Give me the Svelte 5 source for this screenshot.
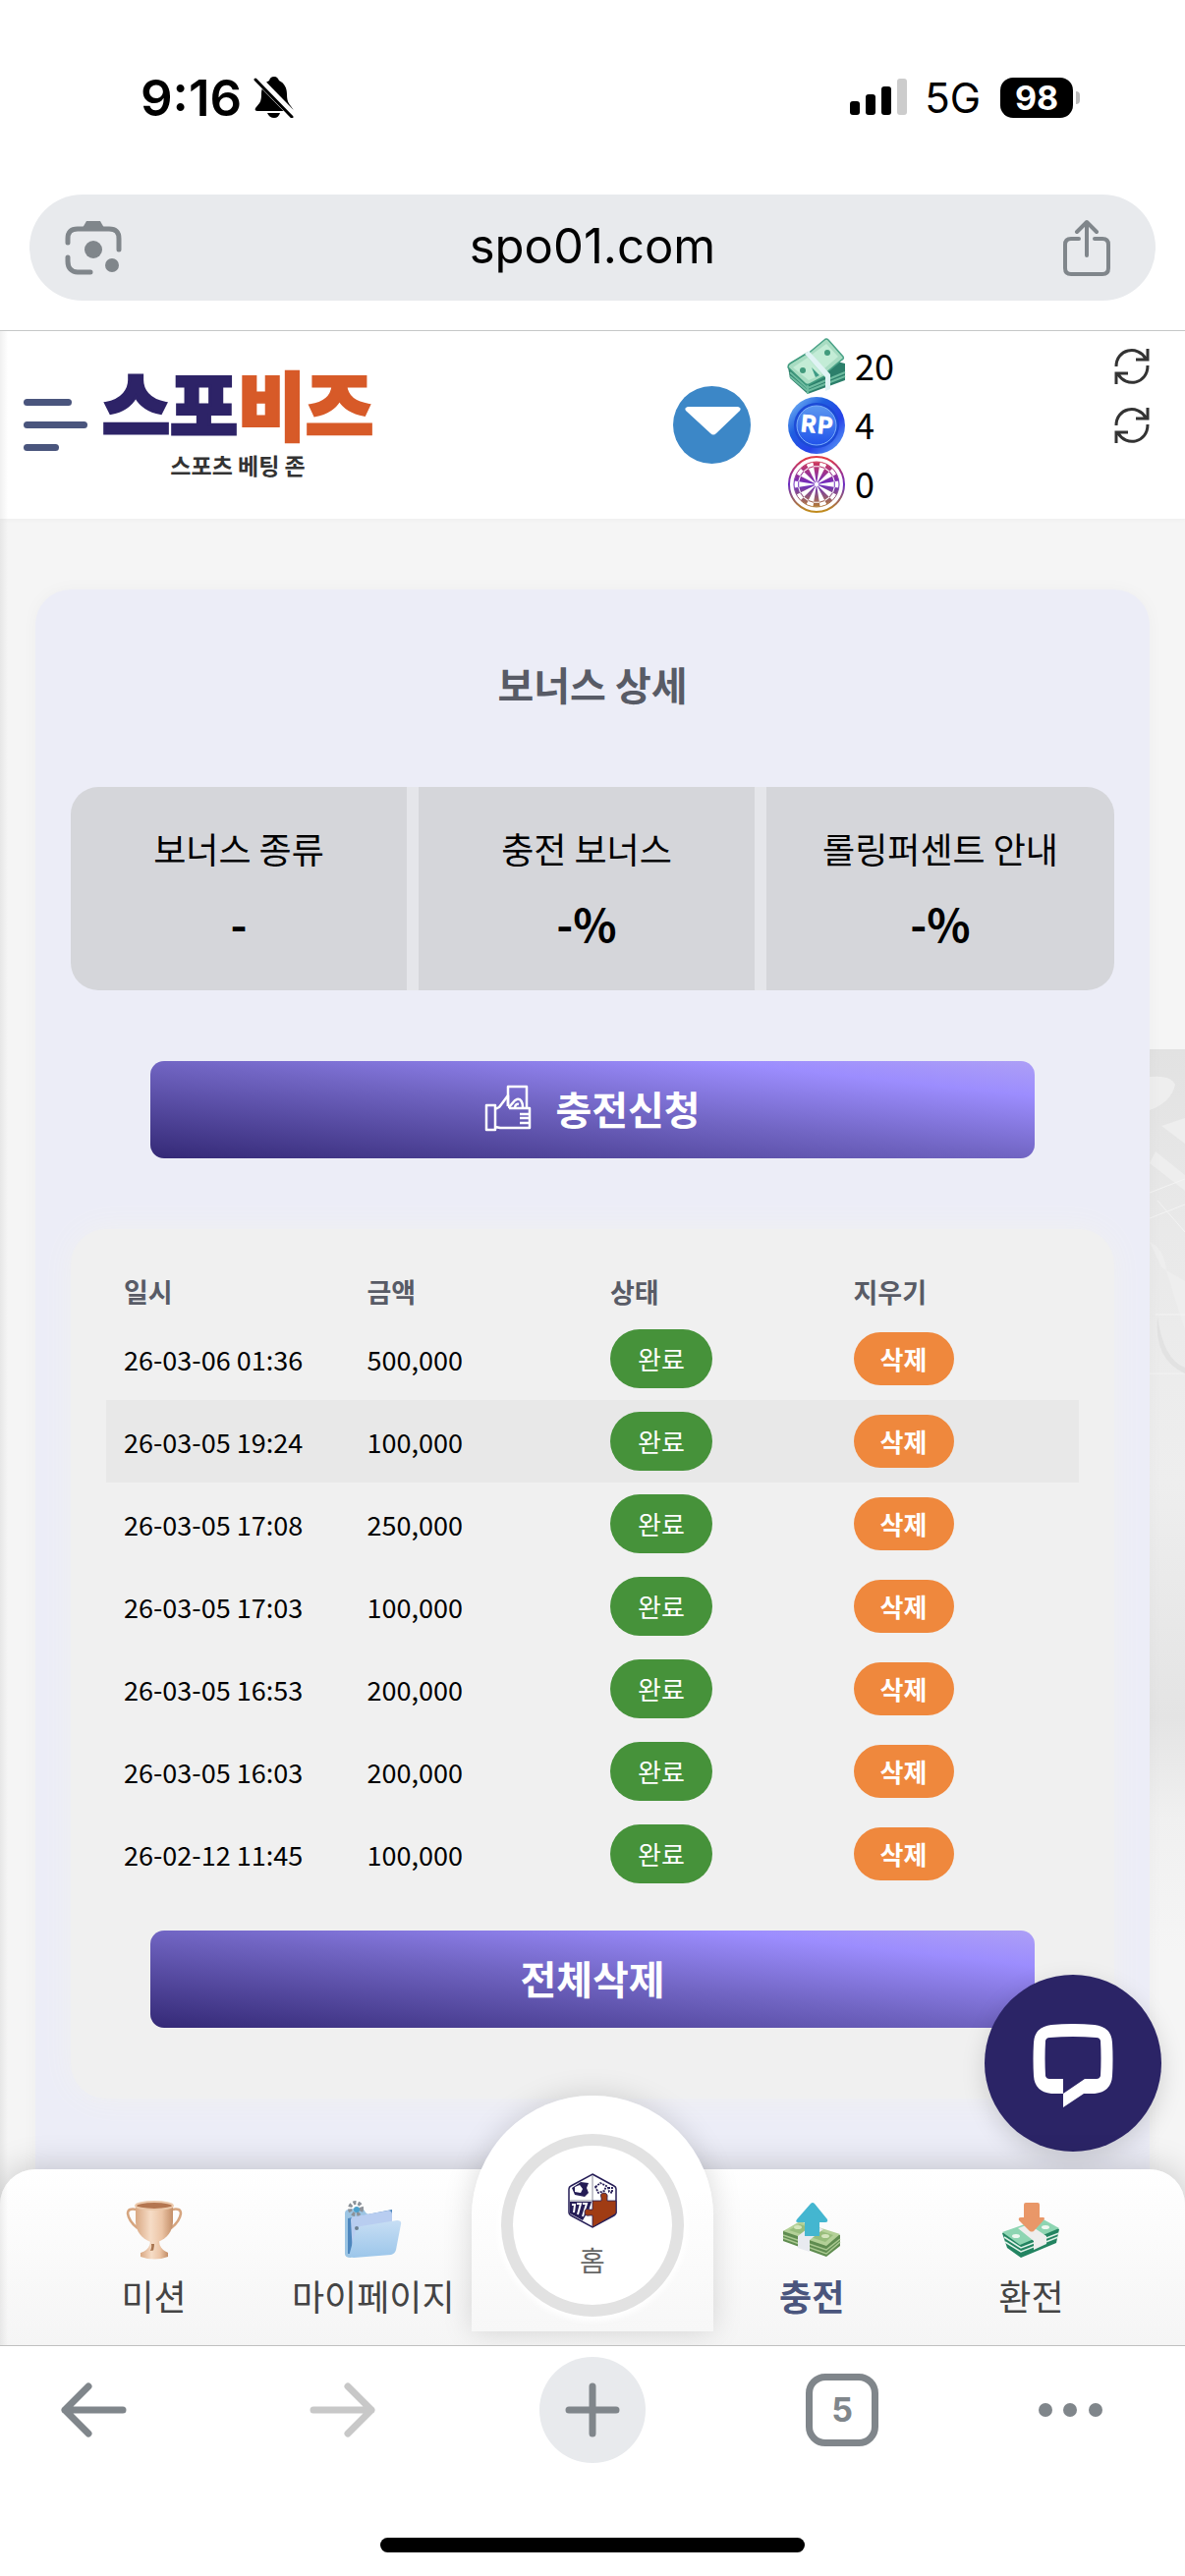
<script>
    const bonuses = [
        { label: "보너스 종류", value: "-" },
        { label: "충전 보너스", value: "-%" },
        { label: "롤링퍼센트 안내", value: "-%" },
    ];

    let deposits = [
        { date: "26-03-06 01:36", amount: "500,000" },
        { date: "26-03-05 19:24", amount: "100,000", active: true },
        { date: "26-03-05 17:08", amount: "250,000" },
        { date: "26-03-05 17:03", amount: "100,000" },
        { date: "26-03-05 16:53", amount: "200,000" },
        { date: "26-03-05 16:03", amount: "200,000" },
        { date: "26-02-12 11:45", amount: "100,000" },
    ];

    function removeDeposit(deposit) {
        deposits = deposits.filter((d) => d !== deposit);
    }

    function removeAll() {
        deposits = [];
    }

    // dartboard sectors
    const sectors = Array.from({ length: 20 }, (_, i) => i);

    function wedge(i, inner, outer) {
        const a = ((i * 18 - 9) * Math.PI) / 180;
        const b = ((i * 18 + 9) * Math.PI) / 180;
        const p = (r, t) => `${30 + r * Math.sin(t)} ${30 - r * Math.cos(t)}`;
        return `M${p(inner, a)}L${p(outer, a)}L${p(outer, b)}L${p(inner, b)}Z`;
    }
</script>

<div class="phone">
    <div class="status-bar">
        <div class="status-left">
            <span class="clock">9:16</span>
            <svg width="42" height="42" viewBox="0 0 42 42">
                <path
                    d="M21 0c3 0 4 2 5 4 6 3 8 8 8 14 0 9 3 10 6 15 1 2 0 2-2 2H4c-2 0-3-1-2-3 4-5 6-6 6-14 0-7 3-12 8-14 1-3 2-4 5-4z"
                />
                <path d="M14 37h13c-1 3-3 5-6 5s-6-2-7-5z" />
                <path d="M3 1l38 39" stroke="#fff" stroke-width="8" />
                <path d="M2 3l37 38" stroke="#000" stroke-width="3" stroke-linecap="round" />
            </svg>
        </div>
        <div class="status-right">
            <svg width="58" height="38" viewBox="0 0 58 38">
                <rect x="0" y="23" width="10" height="14" rx="3" />
                <rect x="16" y="16" width="10" height="21" rx="3" />
                <rect x="32" y="8" width="10" height="29" rx="3" />
                <rect x="48" y="0" width="10" height="37" rx="3" fill="#ccc" />
            </svg>
            <span class="network">5G</span>
            <div class="battery"><span>98</span></div>
        </div>
    </div>

    <div class="address-bar">
        <button class="plain" aria-label="Lens">
            <svg width="58" height="58" viewBox="0 0 58 58" fill="none" stroke="#80868b" stroke-width="5" stroke-linecap="round">
                <path d="M3 24v-4c0-7 3-10 10-10h32c7 0 10 3 10 10v11" />
                <path d="M3 39v4c0 7 4 11 10 11h13" />
                <path d="M18 9l4-7h14l4 7z" fill="#80868b" stroke="none" />
                <circle cx="29" cy="31" r="9" fill="#80868b" stroke="none" />
                <circle cx="48" cy="47" r="7" fill="#80868b" stroke="none" />
            </svg>
        </button>
        <span>spo01.com</span>
        <button class="plain" aria-label="Share">
            <svg width="58" height="58" viewBox="5 0 58 58" fill="none" stroke="#80868b" stroke-width="4" stroke-linecap="round" stroke-linejoin="round">
                <path d="M21 20h-8c-4 0-6 2-6 6v24c0 4 2 6 6 6h32c4 0 6-2 6-6V26c0-4-2-6-6-6h-8" />
                <path d="M29 37V4M19 13L29 3l10 10" />
            </svg>
        </button>
    </div>

    <div class="site">
        <header>
            <button class="plain menu" aria-label="메뉴">
                <i></i>
                <i></i>
                <i></i>
            </button>
            <a class="logo" href="#home">
                <strong>스포<em>비즈</em></strong>
                <small>스포츠 베팅 존</small>
            </a>
            <button class="plain caret" aria-label="지갑 열기">
                <svg width="79" height="79" viewBox="0 0 79 79">
                    <circle cx="39.500" cy="39.500" r="39.500" fill="#3c87c7" />
                    <path d="M15 21h51q4 1 2 4L44 48q-3 3-6 0L13 25q-2-3 2-4z" fill="#fff" />
                </svg>
            </button>
            <ul class="wallet">
                <li>
                    <svg width="60" height="60" viewBox="0 0 60 60">
                        <path d="M1 31l2 11 18 16 38-14V27L30 20z" fill="#2c7f6b" />
                        <path d="M3 36l18 16 38-16M3 40l18 15 38-15M21 48v10" fill="none" stroke="#6dbb9f" stroke-width="2" />
                        <path d="M20 18L38 3q2-2 4 0l15 17q1 2-1 3L38 38z" fill="#a8dcc2" stroke="#4aa287" stroke-width="1.500" />
                        <path d="M25 18L40 7l12 13-14 12z" fill="#c3ecd6" />
                        <path d="M1 31q0-3 2-4l18-11 21 22-19 10q-2 1-4 0z" fill="#a8dcc2" stroke="#3f9a7e" stroke-width="1.500" />
                        <path d="M6 31l15-10 15 17-14 6z" fill="#c3ecd6" />
                        <circle cx="16" cy="34" r="3" fill="#419a7c" />
                        <circle cx="41" cy="16" r="3" fill="#419a7c" />
                        <path d="M25 31l8 8-4 2z" fill="#3d9b85" />
                        <path d="M18 17l4-3 22 24v15l-5 2V41z" fill="#e0f3f4" />
                    </svg>
                    <span>20</span>
                    <button class="plain refresh" aria-label="보유금 새로고침">
                        {@render refreshIcon()}
                    </button>
                </li>
                <li>
                    <svg width="60" height="60" viewBox="0 0 60 60">
                        <defs>
                            <linearGradient id="coin" x1="0" y1="0" x2="1" y2="1">
                                <stop offset="0" stop-color="#8ac8fa" />
                                <stop offset="0.350" stop-color="#1f5fe0" />
                                <stop offset="0.650" stop-color="#2742e8" />
                                <stop offset="1" stop-color="#63b2fa" />
                            </linearGradient>
                            <linearGradient id="coinFace" x1="0" y1="0" x2="0" y2="1">
                                <stop offset="0" stop-color="#5b98f0" />
                                <stop offset="1" stop-color="#2153ea" />
                            </linearGradient>
                        </defs>
                        <circle cx="30" cy="30" r="29" fill="url(#coin)" />
                        <circle cx="30" cy="30" r="23" fill="#1c4ad6" />
                        <circle cx="30" cy="30" r="20" fill="url(#coinFace)" stroke="#7db0fb" />
                        <text x="30" y="38" text-anchor="middle" class="coin-text" transform="rotate(6 30 30)">RP</text>
                    </svg>
                    <span>4</span>
                    <button class="plain refresh" aria-label="포인트 새로고침">
                        {@render refreshIcon()}
                    </button>
                </li>
                <li>
                    <svg width="60" height="60" viewBox="0 0 60 60">
                        <defs>
                            <linearGradient id="dart" gradientUnits="userSpaceOnUse" x1="0" y1="0" x2="0" y2="60">
                                <stop offset="0.050" stop-color="#e23c46" />
                                <stop offset="0.500" stop-color="#6a2bc4" />
                                <stop offset="0.950" stop-color="#c08a1c" />
                            </linearGradient>
                        </defs>
                        <g fill="url(#dart)">
                            <circle cx="30" cy="30" r="28" fill="none" stroke="url(#dart)" stroke-width="2" />
                            <circle cx="30" cy="30" r="23" fill="none" stroke="url(#dart)" stroke-width="1" />
                            {#each sectors as i}
                                {#if i % 2 === 0}
                                    <path d={wedge(i, 19, 23)} />
                                    <path d={wedge(i, 2, 18)} />
                                {:else}
                                    <path d={wedge(i, 18, 19)} />
                                {/if}
                            {/each}
                        </g>
                    </svg>
                    <span>0</span>
                </li>
            </ul>
        </header>

        <main>
            <svg class="backdrop" width="36" height="920" viewBox="0 0 36 920" preserveAspectRatio="none">
                <defs>
                    <linearGradient id="fade" x1="0" y1="0" x2="0" y2="1">
                        <stop offset="0" stop-color="#e2e2e2" />
                        <stop offset="0.200" stop-color="#e9e9e9" />
                        <stop offset="0.480" stop-color="#eeeeee" />
                        <stop offset="0.740" stop-color="#e4e4e4" />
                        <stop offset="0.850" stop-color="#f0f0f0" />
                        <stop offset="1" stop-color="#f5f5f5" />
                    </linearGradient>
                </defs>
                <rect width="36" height="920" fill="url(#fade)" />
                <path d="M0 28q22-2 26 8-4 18-26 26zM12 78l24-8v26zM6 104l30 24v16L0 116zM0 196q16 8 17 30l19 60v-50l-24-14z" fill="#eeeeee" />
                <path d="M8 154l28 32M0 172l36-14M0 146l36-14M6 270h30M0 330h36" fill="none" stroke="#f3f3f3" stroke-width="1" />
                <path d="M8 272q6 44 28 52v6Q4 316 8 272z" fill="#e2e2e2" />
            </svg>
            <section class="card">
                <h2>보너스 상세</h2>
                <div class="bonus-list">
                    {#each bonuses as bonus}
                        <div class="bonus">
                            <span>{bonus.label}</span>
                            <strong>{bonus.value}</strong>
                        </div>
                    {/each}
                </div>

                <button class="wide-btn">
                    <svg width="48" height="48" viewBox="0 0 48 48" fill="none" stroke="#fff" stroke-width="2.500" stroke-linejoin="round">
                        <path d="M2 21h9v25H2zM11 25l4-2 9-12v11M11 43l5 1h30V24H25" />
                        <path d="M24 22V2h19v21" />
                        <path d="M24 23c4-1 5-7 9-8s6 3 6 8M31 23q1-4 4-3M36 30h10M36 34h10M36 39h10" />
                    </svg>
                    충전신청
                </button>

                <div class="history">
                    <table>
                        <thead>
                            <tr>
                                <th>일시</th>
                                <th>금액</th>
                                <th>상태</th>
                                <th>지우기</th>
                            </tr>
                        </thead>
                        <tbody>
                            {#each deposits as deposit}
                                <tr class:active={deposit.active}>
                                    <td>{deposit.date}</td>
                                    <td>{deposit.amount}</td>
                                    <td><span class="badge">완료</span></td>
                                    <td>
                                        <button class="delete-btn" on:click={() => removeDeposit(deposit)}>삭제</button>
                                    </td>
                                </tr>
                            {/each}
                        </tbody>
                    </table>
                    <button class="wide-btn" on:click={removeAll}>전체삭제</button>
                </div>
            </section>
        </main>

        <button class="chat" aria-label="상담">
            <svg width="84" height="86" viewBox="0 0 84 86">
                <path
                    fill="#fff"
                    fill-rule="evenodd"
                    d="M20 1Q42-1 64 1q17 2 18 18 1 17 0 34-1 16-18 18H53L32 85V71H20Q3 69 2 53 1 36 2 19 3 3 20 1zM18 14q-3 0-4 3-1 18 0 36 1 3 4 3h14v15l22-15h12q3 0 4-3 1-18 0-36-1-3-4-3-24-2-48 0z"
                />
            </svg>
        </button>

        <nav class="tabs">
            <a href="#mission">
                <svg width="60" height="60" viewBox="0 0 60 60">
                    <defs>
                        <linearGradient id="gold" x1="0" y1="0" x2="1" y2="0">
                            <stop offset="0" stop-color="#d9a883" />
                            <stop offset="0.400" stop-color="#f6dcc6" />
                            <stop offset="0.700" stop-color="#ecc5a6" />
                            <stop offset="1" stop-color="#c38e68" />
                        </linearGradient>
                    </defs>
                    <path d="M12 9Q3 7 3 13q1 8 10 15M48 9q9-2 9 4-1 8-10 15" fill="none" stroke="#d6a57f" stroke-width="2.500" />
                    <path d="M11 4h38v17c0 11-7 17-13 20-4 2-8 2-12 0-6-3-13-9-13-20z" fill="url(#gold)" />
                    <ellipse cx="30" cy="5" rx="19" ry="4" fill="#b47650" stroke="#ecc9ab" stroke-width="2" />
                    <path d="M26 41h9q0 8 9 12H17q9-4 9-12z" fill="url(#gold)" />
                    <path d="M27 44q1 6-3 9h4q2-4 2-9z" fill="#a87550" />
                    <path d="M16 53q14-5 28 0v4q-14 5-28 0z" fill="url(#gold)" />
                </svg>
                미션
            </a>
            <a href="#mypage">
                <svg width="60" height="60" viewBox="0 0 60 60">
                    <defs>
                        <linearGradient id="folder" x1="0" y1="0" x2="0" y2="1">
                            <stop offset="0" stop-color="#c7def4" />
                            <stop offset="1" stop-color="#9cc6ea" />
                        </linearGradient>
                    </defs>
                    <path d="M1 13q0-4 4-4l9-2q6 0 8 5l4 3v30L7 58q-6 0-6-4z" fill="#9cc5e4" />
                    <path d="M4 18l45-9v14L9 54H4z" fill="#4d86bd" />
                    <path d="M7 20q0-4 4-4l34-6q4 0 4 4v30L9 54z" fill="#b8cdf0" />
                    <circle cx="12" cy="8" r="6" fill="none" stroke="#8b9299" stroke-width="4" stroke-dasharray="3 2" />
                    <circle cx="13" cy="9" r="3" fill="#4aa0cc" />
                    <path d="M12 31q1-4 5-5l37-6q5 0 4 4l-5 26q-1 4-5 5L10 58q-5 0-4-5z" fill="url(#folder)" />
                    <circle cx="13" cy="28" r="2" fill="#6c7f91" />
                </svg>
                마이페이지
            </a>
            <a class="home" href="#home">
                <span class="ring">
                    <svg width="50" height="56" viewBox="0 0 50 56">
                        <path d="M25 1l22 12q2 1 2 3v24q0 2-2 3L25 55 3 43q-2-1-2-3V16q0-2 2-3z" fill="#fff" stroke="#251d56" stroke-width="1.500" />
                        <path d="M4 15l9-6 8 1-2 5 2 5-4 4-10-2z" fill="#251d56" />
                        <path d="M7 14l5-2 3 4-2 4-6-1z" fill="#fff" />
                        <path d="M28 14l5-4 6 3-2 5-6 2zM41 15h4v5l-3-1z" fill="none" stroke="#251d56" stroke-width="1.800" stroke-dasharray="2 1" />
                        <path d="M2 29h22l-3 9-6 10L2 41z" fill="#251d56" />
                        <path d="M4 32h3l-1 8M9 31h4l-3 11M15 31h4l-4 13" fill="none" stroke="#fff" stroke-width="2" />
                        <path d="M25 2v26H2" fill="none" stroke="#8c8c9c" />
                        <path d="M25 28h9v-3q-2-4 2-5 5 0 4 5v3h9v13L25 55V43h-3q-5 1-5-3 0-5 5-3h3z" fill="#a03c14" stroke="#251d56" stroke-width="0.800" />
                    </svg>
                    홈
                </span>
            </a>
            <a class="current" href="#deposit">
                <svg width="60" height="60" viewBox="0 0 60 60">
                    <path d="M1 31v10l44 16 14-11V35L18 24z" fill="#5f8c50" />
                    <path d="M1 35l44 15 14-11M1 38l44 16 14-12" fill="none" stroke="#a9c890" stroke-width="1.500" />
                    <path d="M1 31l17-10 41 13-14 12z" fill="#b3d097" />
                    <path d="M7 30l11-6 34 11-8 7z" fill="#97bd7c" />
                    <ellipse cx="16" cy="27" rx="4" ry="2" fill="#d4e5bd" />
                    <ellipse cx="44" cy="36" rx="4" ry="2" fill="#d4e5bd" />
                    <path d="M16 36l14-11 12 4-14 11v12l-12-4z" fill="#e8eaf0" />
                    <path d="M29 3q2-2 4 0l13 16q1 3-2 3h-6v14H23V22h-7q-3 0-1-3z" fill="#44b6d0" />
                </svg>
                충전
            </a>
            <a href="#withdraw">
                <svg width="60" height="60" viewBox="0 0 60 60">
                    <path d="M1 33l5 15 14 10 36-15 3-14-19-10z" fill="#238461" />
                    <path d="M3 37l17 11 39-15M4 42l16 10 38-15" fill="none" stroke="#dff2e8" stroke-width="1.500" />
                    <path d="M1 32l40-14 18 10-40 17z" fill="#8ed5b2" />
                    <ellipse cx="15" cy="36" rx="4" ry="2" fill="#eff8f0" />
                    <ellipse cx="45" cy="27" rx="4" ry="2" fill="#eff8f0" />
                    <path d="M17 28l11-4 18 12v8l-13 6v-9z" fill="#eeeeed" />
                    <path d="M23 4q0-2 2-2h12q2 0 2 2v13h4q2 1 0 3L33 31q-2 1-4 0L18 20q-1-3 2-3h3z" fill="#e99768" />
                </svg>
                환전
            </a>
        </nav>
    </div>

    <div class="toolbar">
        <button class="plain" aria-label="Back">
            <svg width="68" height="56" viewBox="0 0 68 56" fill="none" stroke="#80868b" stroke-width="7" stroke-linecap="round" stroke-linejoin="round">
                <path d="M64 28H5M29 4L5 28l24 24" />
            </svg>
        </button>
        <button class="plain" aria-label="Forward">
            <svg width="68" height="56" viewBox="0 0 68 56" fill="none" stroke="#c8c8c8" stroke-width="7" stroke-linecap="round" stroke-linejoin="round">
                <path d="M4 28h59M39 4l24 24-24 24" />
            </svg>
        </button>
        <button class="plain new-tab" aria-label="New tab">
            <svg width="56" height="56" viewBox="0 0 56 56" stroke="#80868b" stroke-width="7" stroke-linecap="round">
                <path d="M28 4v48M4 28h48" />
            </svg>
        </button>
        <button class="plain"><span class="tab-count">5</span></button>
        <button class="plain more" aria-label="More">
            <svg width="68" height="16" viewBox="0 0 68 16" fill="#80868b">
                <circle cx="7" cy="8" r="7" />
                <circle cx="32" cy="8" r="7" />
                <circle cx="58" cy="8" r="7" />
            </svg>
        </button>
    </div>
    <div class="home-indicator"></div>
</div>

{#snippet refreshIcon()}
    <svg width="36" height="36" viewBox="0 0 36 36" fill="none" stroke="#333" stroke-width="3">
        <path d="M2 18C2 0 24-4 32 10M34 0v11H22" />
        <path d="M34 17C34 36 12 40 4 26M2 36V25h12" />
    </svg>
{/snippet}

<style>
    :global(body) {
        background: #fff;
    }

    .phone {
        display: flex;
        flex-direction: column;
        min-height: 100vh;
        font-family: "Noto Sans CJK KR", sans-serif;
        color: #000;
    }

    .phone * {
        box-sizing: border-box;
    }

    svg {
        display: block;
        flex-shrink: 0;
    }

    button {
        margin: 0;
        border: none;
        font-family: inherit;
        cursor: pointer;
    }

    a {
        color: inherit;
        text-decoration: none;
    }

    .plain {
        padding: 0;
        background: none;
    }

    .status-bar {
        display: flex;
        justify-content: space-between;
        align-items: center;
        height: 198px;
        padding: 0 114px 0 143px;
        font-family: Inter, sans-serif;
    }

    .status-left,
    .status-right {
        display: flex;
        align-items: center;
    }

    .status-left {
        gap: 12px;
    }

    .clock {
        font-size: 51px;
        font-weight: 600;
    }

    .network {
        margin: 0 20px 0 18px;
        font-size: 42px;
    }

    .battery {
        position: relative;
        width: 74px;
        height: 41px;
        border-radius: 13px;
        background: #000;
        color: #fff;
        font-size: 34px;
        font-weight: 700;
        line-height: 41px;
        text-align: center;
    }

    .battery::after {
        content: "";
        position: absolute;
        top: 14px;
        right: -7px;
        width: 4px;
        height: 13px;
        border-radius: 0 4px 4px 0;
        background: #bbb;
    }

    .address-bar {
        display: flex;
        justify-content: space-between;
        align-items: center;
        height: 108px;
        margin: 0 30px 30px;
        padding: 0 36px;
        border-radius: 54px;
        background: #e8eaed;
        font-family: Inter, sans-serif;
        font-size: 49px;
    }

    .address-bar span {
        padding-bottom: 4px;
    }

    .site {
        position: relative;
        border-top: 1px solid #c6c8c8;
        border-bottom: 1px solid #c0c0c0;
        background: #f5f5f5;
        overflow: hidden;
    }

    .site::before {
        content: "";
        position: absolute;
        z-index: 5;
        top: 0;
        bottom: 0;
        left: 0;
        width: 8px;
        background: linear-gradient(90deg, rgba(0, 0, 0, 0.06), transparent);
    }

    header {
        display: flex;
        align-items: center;
        height: 191px;
        padding: 0 36px 0 24px;
        background: #fff;
        box-shadow: 0 0 6px rgba(0, 0, 0, 0.04);
    }

    .menu {
        display: flex;
        flex-direction: column;
        gap: 16px;
        width: 65px;
    }

    .menu i {
        width: 49px;
        height: 7px;
        border-radius: 4px;
        background: #4a557d;
    }

    .menu i:nth-child(2) {
        width: 65px;
    }

    .menu i:nth-child(3) {
        width: 36px;
    }

    .logo {
        display: flex;
        flex-direction: column;
        align-items: center;
        margin: 0 auto 0 15px;
    }

    .logo strong {
        color: #2d2367;
        font-size: 75px;
        font-weight: 900;
        line-height: 80px;
        -webkit-text-stroke: 3px currentColor;
    }

    .logo em {
        color: #d75a28;
        font-style: normal;
    }

    .logo small {
        color: #333;
        font-size: 23px;
        font-weight: 700;
        line-height: 46px;
    }

    .caret {
        margin-right: 37px;
    }

    .wallet {
        width: 369px;
        margin: 0;
        padding: 0;
        list-style: none;
    }

    .wallet li {
        display: flex;
        align-items: center;
        gap: 9px;
        height: 60px;
        font-size: 36px;
        line-height: 52px;
    }

    .wallet span {
        padding-bottom: 4px;
    }

    .coin-text {
        fill: #fff;
        font-size: 24px;
        font-weight: 900;
    }

    .refresh {
        margin-left: auto;
    }

    main {
        position: relative;
        padding: 72px 36px 0;
    }

    .backdrop {
        position: absolute;
        top: 540px;
        right: 0;
    }

    .card {
        position: relative;
        display: flex;
        flex-direction: column;
        align-items: center;
        padding: 66px 36px 251px;
        border-radius: 36px 36px 0 0;
        background: #ecedf7;
        box-shadow: 0 0 18px rgba(0, 0, 0, 0.03);
    }

    h2 {
        margin: 0 0 75px;
        color: #585b66;
        font-size: 40px;
        font-weight: 700;
        line-height: 60px;
    }

    .bonus-list {
        display: grid;
        grid-template-columns: repeat(3, 1fr);
        width: 100%;
        margin-bottom: 72px;
        border-radius: 28px;
        background: #d5d6da;
        overflow: hidden;
    }

    .bonus {
        display: flex;
        flex-direction: column;
        align-items: center;
        gap: 14px;
        padding: 36px 0 33px;
    }

    .bonus:not(:last-child) {
        border-right: 12px solid #e5e6ea;
    }

    .bonus span {
        font-size: 36px;
        line-height: 52px;
    }

    .bonus strong {
        font-size: 46px;
        font-weight: 700;
        line-height: 72px;
    }

    .wide-btn {
        display: flex;
        justify-content: center;
        align-items: center;
        gap: 24px;
        width: 100%;
        max-width: 900px;
        height: 99px;
        padding: 0 0 4px;
        border-radius: 14px;
        background: linear-gradient(to top right, #342976, #7165c3 50%, #9c8dfe 82%, #ad9ff6);
        color: #fff;
        font-size: 40px;
        font-weight: 700;
    }

    .history {
        display: flex;
        flex-direction: column;
        align-items: center;
        gap: 36px;
        width: 100%;
        margin-top: 72px;
        padding: 36px 36px 72px;
        border-radius: 36px;
        background: #f0f0f0;
        box-shadow: 0 0 30px #f0f0f0;
    }

    table {
        width: 100%;
        table-layout: fixed;
        border-collapse: collapse;
        font-size: 27px;
    }

    th,
    td {
        padding: 0 0 0 18px;
        text-align: left;
        white-space: nowrap;
    }

    th {
        height: 54px;
        color: #585b66;
        font-size: 27px;
        font-weight: 700;
    }

    td {
        height: 84px;
    }

    .active {
        background: #e8e8e8;
    }

    .badge,
    .delete-btn {
        display: block;
        color: #fff;
        font-size: 26px;
        text-align: center;
    }

    .badge {
        width: 104px;
        border-radius: 30px;
        background: #46923a;
        line-height: 60px;
    }

    .delete-btn {
        width: 102px;
        padding: 0;
        border-radius: 27px;
        background: #ef883d;
        font-weight: 700;
        line-height: 54px;
    }

    .chat {
        position: absolute;
        right: 24px;
        bottom: 197px;
        display: flex;
        justify-content: center;
        align-items: center;
        width: 180px;
        height: 180px;
        padding: 6px 0 0;
        border-radius: 50%;
        background: #2b2466;
        box-shadow: 0 8px 24px rgba(0, 0, 0, 0.15);
    }

    .tabs {
        position: absolute;
        right: 0;
        bottom: 0;
        left: 0;
        display: grid;
        grid-template-rows: 100%;
        grid-template-columns: repeat(5, 1fr);
        height: 179px;
        padding: 0 45px;
        border-radius: 36px 36px 0 0;
        background: linear-gradient(#fff, #f5f5f5);
        box-shadow: 0 0 36px rgba(0, 0, 0, 0.2);
        color: #444;
        font-size: 36px;
        line-height: 52px;
    }

    .tabs a {
        display: flex;
        flex-direction: column;
        align-items: center;
        gap: 10px;
        padding-top: 32px;
        white-space: nowrap;
    }

    .tabs .current {
        color: #4a557d;
        font-weight: 700;
    }

    .tabs .home {
        justify-self: center;
        align-self: end;
        width: 246px;
        height: 240px;
        margin: 0 -12px 14px;
        padding-top: 39px;
        border-radius: 123px 123px 0 0;
        background: linear-gradient(#fff 40%, #f7f7f7);
        box-shadow: 0 0 30px rgba(0, 0, 0, 0.15);
    }

    .ring {
        display: flex;
        flex-direction: column;
        align-items: center;
        gap: 12px;
        width: 186px;
        height: 186px;
        padding-top: 28px;
        border: 12px solid #e2e2e2;
        border-radius: 50%;
        background: #fff;
        box-shadow: 0 0 6px 4px #fff;
        color: #666;
        font-size: 28px;
        line-height: 40px;
    }

    .toolbar {
        display: flex;
        justify-content: space-between;
        align-items: center;
        margin-top: 11px;
        padding: 0 41px;
    }

    .toolbar button {
        display: flex;
        justify-content: center;
        align-items: center;
        width: 108px;
        height: 108px;
    }

    .toolbar .new-tab {
        border-radius: 50%;
        background: #e8eaed;
    }

    .toolbar .more {
        justify-content: flex-start;
    }

    .tab-count {
        width: 74px;
        height: 74px;
        border: 7px solid #80868b;
        border-radius: 20px;
        color: #80868b;
        font-family: Inter, sans-serif;
        font-size: 34px;
        font-weight: 700;
        line-height: 60px;
    }

    .home-indicator {
        width: 432px;
        height: 15px;
        margin: auto auto 24px;
        border-radius: 8px;
        background: #000;
    }
</style>
